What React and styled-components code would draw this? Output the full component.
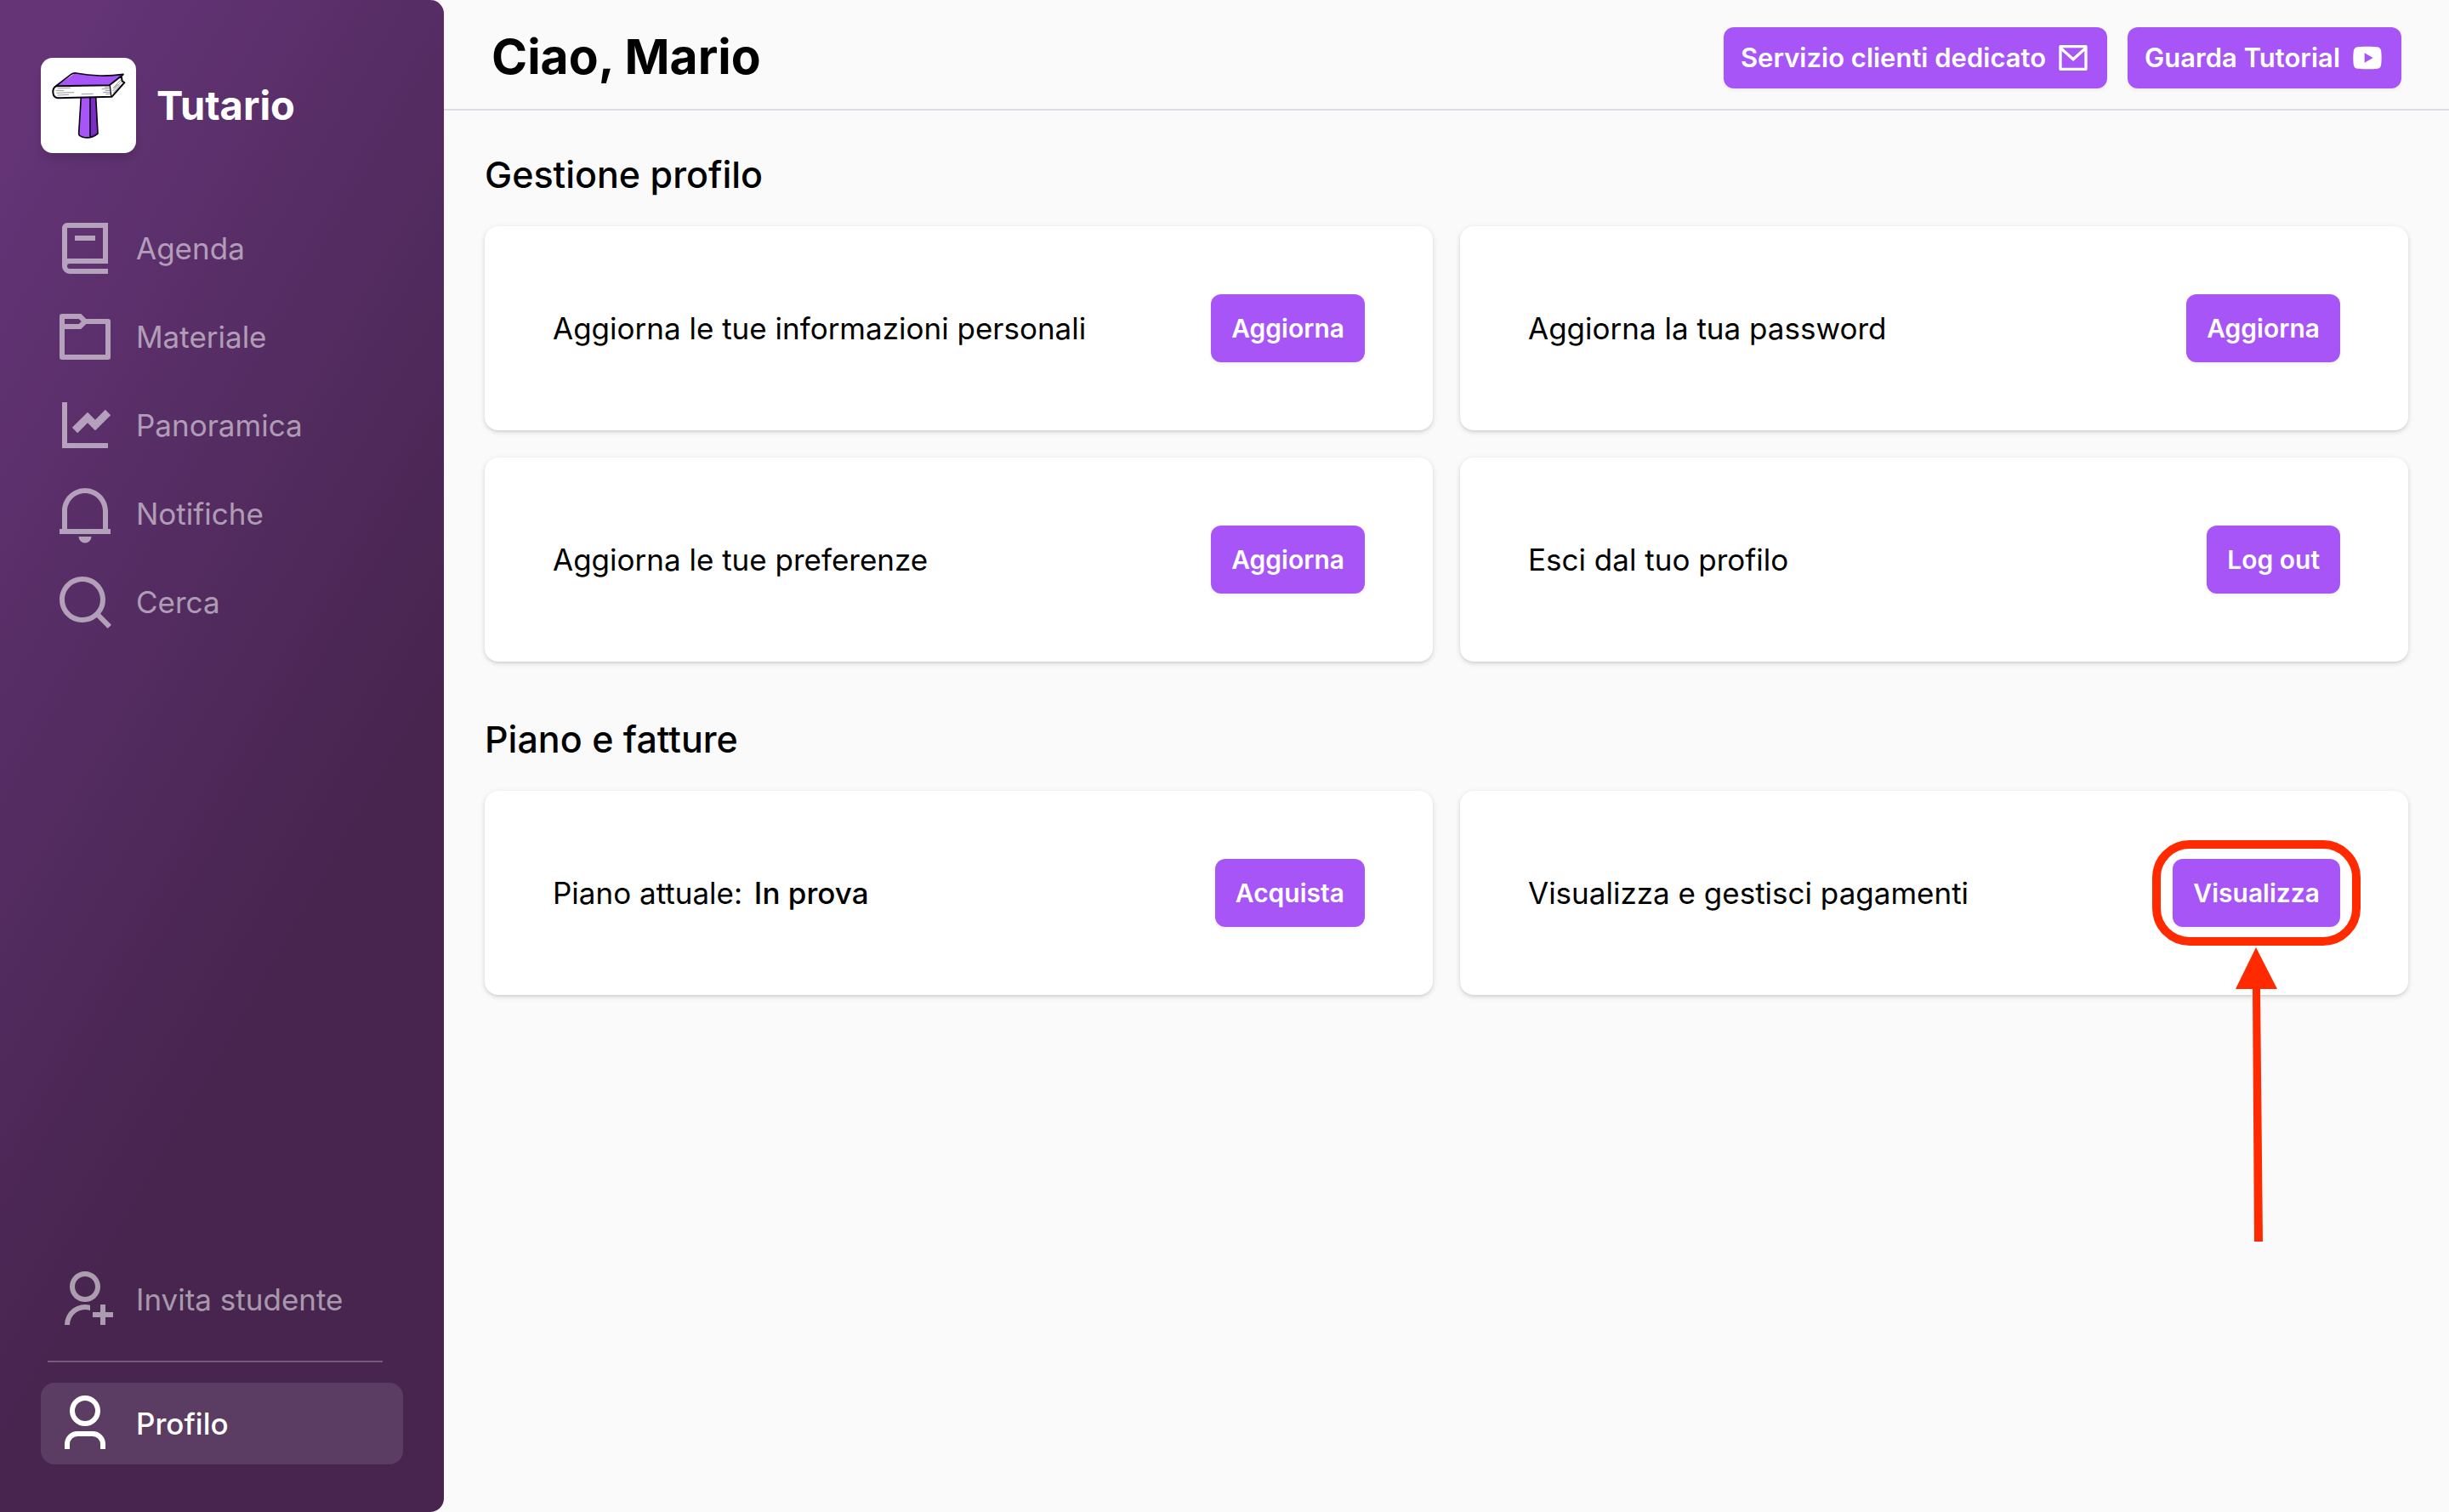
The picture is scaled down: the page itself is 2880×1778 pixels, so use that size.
import React from "react";
import styled, { createGlobalStyle } from "styled-components";

const color = {
  accent: "#a855f7",
  page: "#fafafa",
  line: "#dddde6",
  marker: "#ff2a00",
};

const GlobalStyle = createGlobalStyle`
  *, *::before, *::after { box-sizing: border-box; }
  body {
    margin: 0;
    background: ${color.page};
    color: #000;
    font-family: Inter, "Liberation Sans", sans-serif;
    font-size: 35px;
    line-height: 48px;
  }
  h1, h2, p, ul { margin: 0; padding: 0; }
  ul { list-style: none; }
`;

const Shell = styled.div`
  display: flex;
  min-height: 100vh;
`;

const Sidebar = styled.aside`
  display: flex;
  flex-direction: column;
  flex: 0 0 522px;
  padding: 68px 48px 56px;
  border-radius: 0 16px 16px 0;
  background: linear-gradient(120deg, #643477 6%, #47254f 64%);
`;

const Brand = styled.a`
  display: flex;
  align-items: center;
  gap: 24px;
  margin-bottom: 64px;
  color: #fff;
  font-size: 47px;
  font-weight: 700;
  text-decoration: none;
`;

const LogoTile = styled.span`
  display: block;
  width: 112px;
  height: 112px;
  border-radius: 14px;
  background: #fff;
  box-shadow: 0 8px 12px -2px rgba(0, 0, 0, 0.14);

  svg { display: block; width: 100%; height: 100%; }
`;

const Nav = styled.nav`
  display: flex;
  flex: 1;
  flex-direction: column;
  justify-content: space-between;
`;

const NavList = styled.ul`
  display: grid;
  gap: 8px;
`;

const NavLink = styled.a`
  display: flex;
  align-items: center;
  gap: 24px;
  height: 96px;
  padding: 0 16px;
  border-radius: 16px;
  color: ${(p) => (p.$active ? "#fff" : "rgba(255, 255, 255, 0.55)")};
  background: ${(p) => (p.$active ? "rgba(255, 255, 255, 0.11)" : "transparent")};
  font-weight: ${(p) => (p.$active ? 500 : 400)};
  text-decoration: none;
`;

const Glyph = styled.svg`
  flex: none;
  width: ${(p) => p.$size}px;
  height: ${(p) => p.$size}px;
  fill: currentColor;
`;

const Divider = styled.hr`
  height: 2px;
  margin: 24px 24px 24px 8px;
  border: 0;
  background: rgba(255, 255, 255, 0.25);
`;

const Main = styled.main`
  flex: 1;
  min-width: 0;
`;

const Header = styled.header`
  display: flex;
  align-items: flex-start;
  justify-content: space-between;
  padding: 32px 56px 24px;
  border-bottom: 2px solid ${color.line};
`;

const Title = styled.h1`
  font-size: 57px;
  font-weight: 700;
  line-height: 70px;
`;

const Actions = styled.div`
  display: flex;
  gap: 24px;
`;

const Button = styled.button`
  display: inline-flex;
  align-items: center;
  gap: 12px;
  height: ${(p) => (p.$compact ? 72 : 80)}px;
  padding: 0 ${(p) => (p.$compact ? 20 : 24)}px;
  border: 0;
  border-radius: 12px;
  background: ${color.accent};
  box-shadow: 0 2px 4px rgba(0, 0, 0, 0.06);
  color: #fff;
  font-family: inherit;
  font-size: ${(p) => (p.$compact ? 31 : 30)}px;
  font-weight: 600;
  line-height: 40px;
  white-space: nowrap;
  cursor: pointer;
`;

const Content = styled.div`
  display: grid;
  gap: 60px;
  padding: 44px 48px;
`;

const Section = styled.section`
  display: grid;
  gap: 30px;
`;

const Heading = styled.h2`
  font-size: 43px;
  font-weight: 500;
  line-height: 62px;
`;

const Cards = styled.div`
  display: grid;
  grid-template-columns: 1fr 1fr;
  gap: 32px;
`;

const Card = styled.div`
  display: flex;
  align-items: center;
  justify-content: space-between;
  padding: 80px;
  border-radius: 16px;
  background: #fff;
  box-shadow: 0 2px 6px rgba(0, 0, 0, 0.14), 0 2px 4px -2px rgba(0, 0, 0, 0.12);
`;

const Plan = styled.strong`
  margin-left: 4px;
  font-weight: 500;
`;

const Marked = styled.div`
  position: relative;
  display: flex;
`;

const Ring = styled.span`
  position: absolute;
  inset: -22px -24px;
  border: 10px solid ${color.marker};
  border-radius: 44px;
  pointer-events: none;
`;

const Arrow = styled.svg`
  position: absolute;
  top: 104px;
  left: 50%;
  width: 50px;
  height: 346px;
  margin-left: -25px;
  fill: ${color.marker};
  pointer-events: none;
`;

const paths = {
  book: "M21 18H6a1 1 0 0 0 0 2h15v2H6a3 3 0 0 1-3-3V4a2 2 0 0 1 2-2h16v16zM5 16.05c.162-.033.329-.05.5-.05H19V4H5v12.05zM16 9H8V7h8v2z",
  folder:
    "M12.414 5H21a1 1 0 0 1 1 1v14a1 1 0 0 1-1 1H3a1 1 0 0 1-1-1V4a1 1 0 0 1 1-1h7.414l2 2zM4 9v10h16V7h-7.586l-2 2H4zm0-4v2h5.586l1-1-1-1H4z",
  chart:
    "M5 3v16h16v2H3V3h2zm14.94 2.94l2.12 2.12L16 14.122l-3-3-3.94 3.94-2.12-2.122L13 6.88l3 3 3.94-3.94z",
  bell: "M22 20H2v-2h1v-6.969C3 6.043 7.03 2 12 2s9 4.043 9 9.031V18h1v2zM5 18h14v-6.969C19 7.148 15.866 4 12 4s-7 3.148-7 7.031V18zm4.5 3h5a2.5 2.5 0 1 1-5 0z",
  search:
    "M18.031 16.617l4.283 4.282-1.415 1.415-4.282-4.283A8.96 8.96 0 0 1 11 20c-4.968 0-9-4.032-9-9s4.032-9 9-9 9 4.032 9 9a8.96 8.96 0 0 1-1.969 5.617zm-2.006-.742A6.977 6.977 0 0 0 18 11c0-3.868-3.133-7-7-7-3.868 0-7 3.132-7 7 0 3.867 3.132 7 7 7a6.977 6.977 0 0 0 4.875-1.975l.15-.15z",
  invite:
    "M14 14.252v2.09A6 6 0 0 0 6 22H4a8 8 0 0 1 10-7.748zM12 13c-3.315 0-6-2.685-6-6s2.685-6 6-6 6 2.685 6 6-2.685 6-6 6zm0-2c2.21 0 4-1.79 4-4s-1.79-4-4-4-4 1.79-4 4 1.79 4 4 4zm6 6v-3h2v3h3v2h-3v3h-2v-3h-3v-2h3z",
  user: "M20 22h-2v-2a3 3 0 0 0-3-3H9a3 3 0 0 0-3 3v2H4v-2a5 5 0 0 1 5-5h6a5 5 0 0 1 5 5v2zm-8-9a6 6 0 1 1 0-12 6 6 0 0 1 0 12zm0-2a4 4 0 1 0 0-8 4 4 0 0 0 0 8z",
  mail: "M3 3h18a1 1 0 0 1 1 1v16a1 1 0 0 1-1 1H3a1 1 0 0 1-1-1V4a1 1 0 0 1 1-1zm17 4.238l-7.928 7.1L4 7.216V19h16V7.238zM4.511 5l7.55 6.662L19.502 5H4.511z",
  video:
    "M21.543 6.498C22 8.28 22 12 22 12s0 3.72-.457 5.502c-.254.985-.997 1.76-1.938 2.022C17.896 20 12 20 12 20s-5.893 0-7.605-.476c-.945-.266-1.687-1.04-1.938-2.022C2 15.72 2 12 2 12s0-3.72.457-5.502c.254-.985.997-1.76 1.938-2.022C6.107 4 12 4 12 4s5.896 0 7.605.476c.945.266 1.687 1.04 1.938 2.022zM10 15.5l6-3.5-6-3.5v7z",
};

const Icon = ({ name, size = 72 }) => (
  <Glyph $size={size} viewBox="0 0 24 24" fillRule="evenodd" aria-hidden="true">
    <path d={paths[name]} />
  </Glyph>
);

const Logo = () => (
  <svg viewBox="6 6 336 336" aria-hidden="true" strokeLinejoin="round" strokeLinecap="round">
    <path d="M149 144L141 272Q140 280 150 284Q164 289 178 288V144Z" fill="#a855f7" />
    <path d="M178 144V288Q196 286 207 274L200 144Z" fill="#7e2cc8" />
    <path d="M148 144L140 272Q139 281 152 285Q182 294 207 273L200 144M180 144V286" fill="none" stroke="#080510" strokeWidth="5" />
    <path d="M60 104Q47 112 49 130Q51 148 66 149L256 143L300 93L294 86L296 66L246 103Z" fill="#fff" />
    <path d="M127 60Q172 67 215 69Q255 70 296 64L248 103L60 106Z" fill="#a855f7" />
    <path d="M60 105L112 65Q120 59 130 60Q172 67 215 69Q255 70 296 64" fill="none" stroke="#080510" strokeWidth="5" />
    <path d="M62 106L248 103L296 65L290 70L293 88L301 93L257 143L66 148Q50 146 49 128Q48 110 62 105" fill="none" stroke="#080510" strokeWidth="6" />
    <path d="M250 105L254 140" fill="none" stroke="#080510" strokeWidth="4" />
    <path
      d="M66 114L110 112M60 122L86 122M62 130L122 128M66 138L104 136M150 134L190 133M232 110L248 109M222 116L249 115M234 122L249 121M226 128L250 127M236 134L251 133M262 112L288 84M260 122L290 90M262 130L284 102M264 112L276 100"
      fill="none"
      stroke="#444"
      strokeWidth="1.6"
    />
  </svg>
);

const mainLinks = [
  ["book", "Agenda"],
  ["folder", "Materiale"],
  ["chart", "Panoramica"],
  ["bell", "Notifiche"],
  ["search", "Cerca"],
];

const profileCards = [
  ["Aggiorna le tue informazioni personali", "Aggiorna"],
  ["Aggiorna la tua password", "Aggiorna"],
  ["Aggiorna le tue preferenze", "Aggiorna"],
  ["Esci dal tuo profilo", "Log out"],
];

const NavItem = ({ icon, label, active }) => (
  <li>
    <NavLink href="#" $active={active} aria-current={active ? "page" : undefined}>
      <Icon name={icon} />
      {label}
    </NavLink>
  </li>
);

export default function App() {
  return (
    <>
      <GlobalStyle />
      <Shell>
        <Sidebar>
          <Brand href="#">
            <LogoTile>
              <Logo />
            </LogoTile>
            Tutario
          </Brand>
          <Nav>
            <NavList>
              {mainLinks.map(([icon, label]) => (
                <NavItem key={label} icon={icon} label={label} />
              ))}
            </NavList>
            <div>
              <NavList>
                <NavItem icon="invite" label="Invita studente" />
              </NavList>
              <Divider />
              <NavList>
                <NavItem icon="user" label="Profilo" active />
              </NavList>
            </div>
          </Nav>
        </Sidebar>
        <Main>
          <Header>
            <Title>Ciao, Mario</Title>
            <Actions>
              <Button type="button" $compact>
                Servizio clienti dedicato
                <Icon name="mail" size={40} />
              </Button>
              <Button type="button" $compact>
                Guarda Tutorial
                <Icon name="video" size={40} />
              </Button>
            </Actions>
          </Header>
          <Content>
            <Section>
              <Heading>Gestione profilo</Heading>
              <Cards>
                {profileCards.map(([text, action]) => (
                  <Card key={text}>
                    <p>{text}</p>
                    <Button type="button">{action}</Button>
                  </Card>
                ))}
              </Cards>
            </Section>
            <Section>
              <Heading>Piano e fatture</Heading>
              <Cards>
                <Card>
                  <p>
                    Piano attuale: <Plan>In prova</Plan>
                  </p>
                  <Button type="button">Acquista</Button>
                </Card>
                <Card>
                  <p>Visualizza e gestisci pagamenti</p>
                  <Marked>
                    <Button type="button">Visualizza</Button>
                    <Ring />
                    <Arrow viewBox="0 0 50 346" aria-hidden="true">
                      <path d="M24 0L49 49H29L32 346H22L20 49H0Z" />
                    </Arrow>
                  </Marked>
                </Card>
              </Cards>
            </Section>
          </Content>
        </Main>
      </Shell>
    </>
  );
}
